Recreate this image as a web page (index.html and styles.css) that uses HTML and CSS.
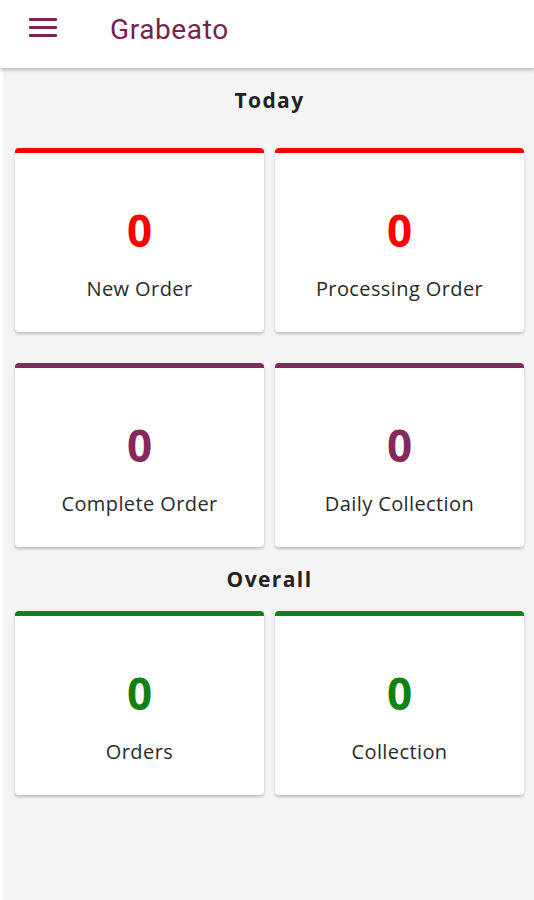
FILE: index.html
```html
<!DOCTYPE html>
<html lang="en">
<head>
	<meta charset="UTF-8">
	<title>Grabeato</title>
	<link rel="stylesheet" href="styles.css">
</head>
<body>
	<div class="header">
		<a href="javascript:;" class="menu">
			<svg width="28" height="20" viewBox="0 0 28 20">
				<rect x="0" y="0" width="28" height="3" rx="1"/>
				<rect x="0" y="8" width="28" height="3" rx="1"/>
				<rect x="0" y="16" width="28" height="3" rx="1"/>
			</svg>
		</a>
		<h1 class="title">Grabeato</h1>
	</div>
	<div class="main">
		<h2 class="sec-title">Today</h2>
		<ul class="cards">
			<li class="card red">
				<p class="num">0</p>
				<p class="label">New Order</p>
			</li>
			<li class="card red">
				<p class="num">0</p>
				<p class="label">Processing Order</p>
			</li>
		</ul>
		<ul class="cards row2">
			<li class="card purple">
				<p class="num">0</p>
				<p class="label">Complete Order</p>
			</li>
			<li class="card purple">
				<p class="num">0</p>
				<p class="label">Daily Collection</p>
			</li>
		</ul>
		<h2 class="sec-title overall">Overall</h2>
		<ul class="cards row3">
			<li class="card green">
				<p class="num">0</p>
				<p class="label">Orders</p>
			</li>
			<li class="card green">
				<p class="num">0</p>
				<p class="label">Collection</p>
			</li>
		</ul>
	</div>
</body>
</html>
```

FILE: styles.css
```css
*{
	margin: 0;
	padding: 0;
	box-sizing: border-box;
}
ul{
	list-style: none;
}
body{
	background-color: #fff;
	font-family: "Open Sans", "Liberation Sans", sans-serif;
}
.header{
	position: relative;
	z-index: 1;
	display: flex;
	align-items: center;
	height: 68px;
	padding-left: 29px;
	background-color: #fff;
	box-shadow: 0 2px 4px rgba(0,0,0,.25);
}
.menu{
	display: block;
	width: 28px;
	height: 20px;
	margin-top: -12px;
	fill: #7b2152;
}
.menu svg{
	display: block;
}
.title{
	margin-left: 53px;
	margin-top: -10px;
	font-family: Roboto, "Liberation Sans", sans-serif;
	font-size: 28px;
	font-weight: 400;
	letter-spacing: 0.6px;
	color: #7b2152;
}
.main{
	min-height: 832px;
	margin-left: 3px;
	padding: 18px 10px 20px 12px;
	background-color: #f4f4f4;
}
.sec-title{
	font-size: 21px;
	line-height: 28px;
	font-weight: 700;
	letter-spacing: 1.4px;
	color: #222;
	text-align: center;
}
.overall{
	margin-top: 18px;
}
.cards{
	display: grid;
	grid-template-columns: 1fr 1fr;
	gap: 11px;
	margin-top: 34px;
}
.cards.row2{
	margin-top: 31px;
}
.cards.row3{
	margin-top: 18px;
}
.card{
	height: 184px;
	padding-top: 55px;
	border-top: 5px solid #f00;
	border-radius: 4px;
	background-color: #fff;
	box-shadow: 0 2px 3px rgba(0,0,0,.22);
	text-align: center;
}
.num{
	font-size: 44px;
	line-height: 44px;
	font-weight: 700;
}
.label{
	margin-top: 24px;
	font-size: 20px;
	line-height: 26px;
	letter-spacing: 0.4px;
	color: #2a2a2a;
}
.red{
	border-top-color: #f00;
}
.red .num{
	color: #f00;
}
.purple{
	border-top-color: #85285b;
}
.purple .num{
	color: #85285b;
}
.green{
	border-top-color: #118211;
}
.green .num{
	color: #118211;
}
```
